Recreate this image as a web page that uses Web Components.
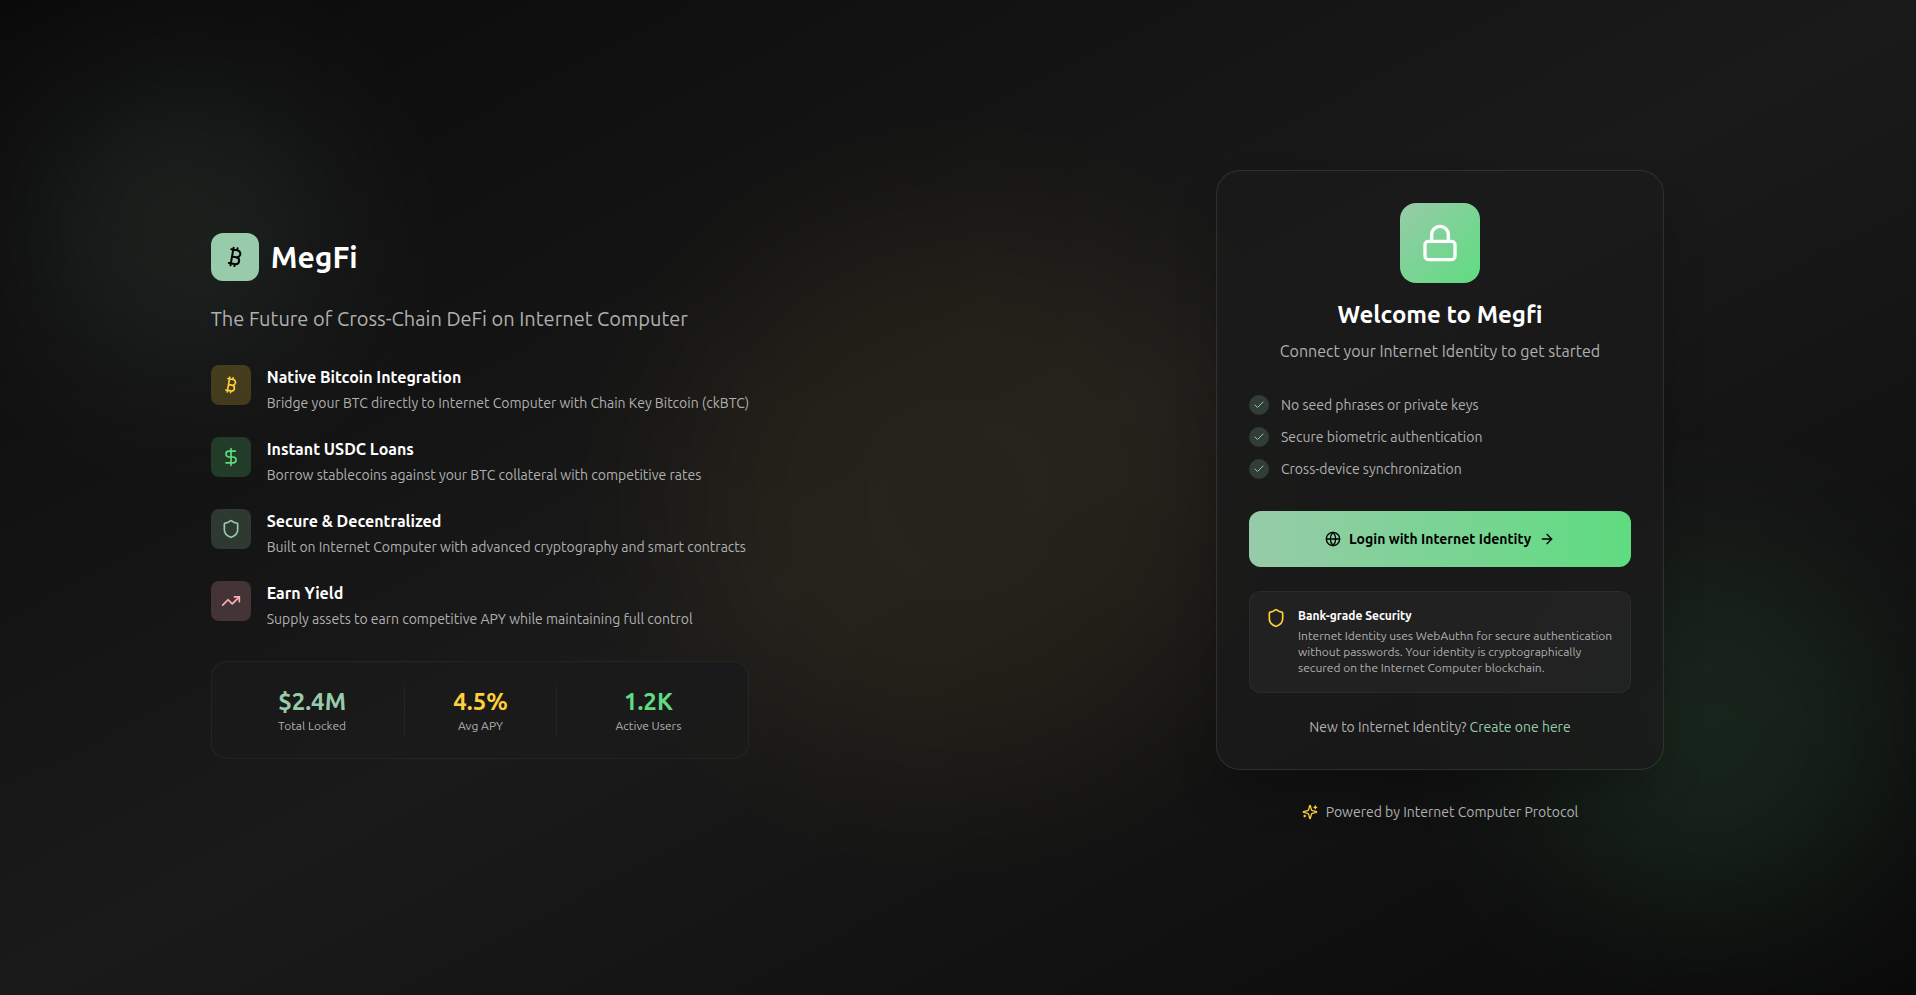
<!DOCTYPE html>
<html lang="en">
<head>
<meta charset="utf-8">
<meta name="viewport" content="width=device-width, initial-scale=1">
<title>MegFi</title>
<style>
  :root {
    --mint: #97cba9;
    --green: #5fdc80;
    --gold: #ffd03a;
    --pink: #ffb0b8;
    --text: #ffffff;
    --muted: #b0b0b0;
    --panel: rgba(26, 26, 26, .8);
  }
  body {
    margin: 0;
    background: #0a0a0a;
    color: var(--text);
    font-family: Ubuntu, "Open Sans", sans-serif;
    font-size: 16px;
    line-height: 24px;
  }
</style>
</head>
<body>
<login-page>
  <brand-intro slot="intro" name="MegFi" tagline="The Future of Cross-Chain DeFi on Internet Computer">
    <feature-item icon="bitcoin" tone="gold" heading="Native Bitcoin Integration">Bridge your BTC directly to Internet Computer with Chain Key Bitcoin (ckBTC)</feature-item>
    <feature-item icon="dollar" tone="green" heading="Instant USDC Loans">Borrow stablecoins against your BTC collateral with competitive rates</feature-item>
    <feature-item icon="shield" tone="mint" heading="Secure &amp; Decentralized">Built on Internet Computer with advanced cryptography and smart contracts</feature-item>
    <feature-item icon="trend" tone="pink" heading="Earn Yield">Supply assets to earn competitive APY while maintaining full control</feature-item>
    <stats-bar slot="stats">
      <stat-cell tone="mint" value="$2.4M">Total Locked</stat-cell>
      <stat-cell tone="gold" value="4.5%">Avg APY</stat-cell>
      <stat-cell tone="green" value="1.2K">Active Users</stat-cell>
    </stats-bar>
  </brand-intro>
  <login-card slot="login" heading="Welcome to Megfi" subheading="Connect your Internet Identity to get started">
    <check-item slot="checks">No seed phrases or private keys</check-item>
    <check-item slot="checks">Secure biometric authentication</check-item>
    <check-item slot="checks">Cross-device synchronization</check-item>
    <login-button slot="action">Login with Internet Identity</login-button>
    <security-note slot="note" heading="Bank-grade Security">Internet Identity uses WebAuthn for secure authentication without passwords. Your identity is cryptographically secured on the Internet Computer blockchain.</security-note>
  </login-card>
  <powered-by slot="login">Powered by Internet Computer Protocol</powered-by>
</login-page>

<script>
const ICONS = {
  bitcoin: '<path d="M11.767 19.089c4.924.868 6.14-6.025 1.216-6.894m-1.216 6.894L5.86 18.047m5.908 1.042-.347 1.97m1.563-8.864c4.924.869 6.14-6.025 1.215-6.893m-1.215 6.893-3.94-.694m5.155-6.2L8.29 4.26m5.908 1.042.348-1.97M7.48 20.364l3.126-17.727"/>',
  dollar: '<path d="M12 2v20"/><path d="M17 5H9.5a3.5 3.5 0 0 0 0 7h5a3.5 3.5 0 0 1 0 7H6"/>',
  shield: '<path d="M20 13c0 5-3.5 7.5-7.66 8.95a1 1 0 0 1-.67-.01C7.5 20.5 4 18 4 13V6a1 1 0 0 1 1-1c2 0 4.5-1.2 6.24-2.72a1.17 1.17 0 0 1 1.52 0C14.51 3.81 17 5 19 5a1 1 0 0 1 1 1z"/>',
  trend: '<path d="m22 7-8.5 8.5-5-5L2 17"/><path d="M16 7h6v6"/>',
  lock: '<rect x="3" y="11" width="18" height="11" rx="2"/><path d="M7 11V7a5 5 0 0 1 10 0v4"/>',
  check: '<path d="M20 6 9 17l-5-5"/>',
  globe: '<circle cx="12" cy="12" r="10"/><path d="M12 2a14.5 14.5 0 0 0 0 20 14.5 14.5 0 0 0 0-20"/><path d="M2 12h20"/>',
  arrow: '<path d="M5 12h14"/><path d="m12 5 7 7-7 7"/>',
  sparkles: '<path d="M9.937 15.5A2 2 0 0 0 8.5 14.063l-6.135-1.582a.5.5 0 0 1 0-.962L8.5 9.936A2 2 0 0 0 9.937 8.5l1.582-6.135a.5.5 0 0 1 .963 0L14.063 8.5A2 2 0 0 0 15.5 9.937l6.135 1.581a.5.5 0 0 1 0 .964L15.5 14.063a2 2 0 0 0-1.437 1.437l-1.582 6.135a.5.5 0 0 1-.963 0z"/><path d="M20 3v4"/><path d="M22 5h-4"/><path d="M4 17v2"/><path d="M5 18H3"/>'
};

class BaseElement extends HTMLElement {
  connectedCallback() {
    if (this.shadowRoot) return;
    this.attachShadow({ mode: 'open' }).innerHTML = `<style>${this.styles()}</style>${this.markup()}`;
  }
  attr(name) {
    return (this.getAttribute(name) || '').replace(/&/g, '&amp;').replace(/</g, '&lt;');
  }
}

class UiIcon extends BaseElement {
  styles() {
    return `
      :host { display: block; flex: none; width: var(--icon-size, 20px); height: var(--icon-size, 20px); }
      svg { display: block; width: 100%; height: 100%; }`;
  }
  markup() {
    return `<svg viewBox="0 0 24 24" fill="none" stroke="currentColor" stroke-width="2" stroke-linecap="round" stroke-linejoin="round" aria-hidden="true">${ICONS[this.getAttribute('name')]}</svg>`;
  }
}

class LoginPage extends BaseElement {
  styles() {
    return `
      :host {
        display: block; position: relative; overflow: hidden; min-height: 100vh;
        background: linear-gradient(to bottom right, #0a0a0a, #1a1a1a, #0a0a0a);
      }
      .glow { position: absolute; border-radius: 50%; filter: blur(80px); pointer-events: none; }
      .mint { top: 80px; left: 36px; width: 288px; height: 288px; background: var(--mint); opacity: .1; }
      .green { bottom: 80px; right: 24px; width: 360px; height: 360px; background: var(--green); opacity: .1; }
      .gold { top: 50%; left: 50%; width: 560px; height: 560px; transform: translate(-50%, -50%); background: var(--gold); opacity: .05; }
      main {
        position: relative; box-sizing: border-box; min-height: 100vh; padding-bottom: 4px;
        display: grid; grid-template-columns: repeat(auto-fit, minmax(min(100%, 600px), 1fr)); align-items: center;
      }
      section { display: grid; justify-content: center; padding: 32px; }
      .intro { padding-left: 34px; }
      .login { grid-template-columns: minmax(0, 448px); gap: 32px; padding-left: 38px; }`;
  }
  markup() {
    return `
      <div class="glow mint"></div><div class="glow green"></div><div class="glow gold"></div>
      <main>
        <section class="intro"><slot name="intro"></slot></section>
        <section class="login"><slot name="login"></slot></section>
      </main>`;
  }
}

class BrandIntro extends BaseElement {
  styles() {
    return `
      :host { display: grid; gap: 32px; }
      header { display: grid; gap: 24px; }
      .brand { display: flex; align-items: center; gap: 12px; }
      .logo { --icon-size: 24px; display: grid; place-items: center; width: 48px; height: 48px; border-radius: 12px; background: var(--mint); color: #000; }
      h1 { margin: 0; font-size: 30px; line-height: 36px; font-weight: 600; }
      p { margin: 0; font-size: 20px; line-height: 28px; color: var(--muted); }
      .features { display: grid; gap: 24px; }`;
  }
  markup() {
    return `
      <header>
        <div class="brand"><span class="logo"><ui-icon name="bitcoin"></ui-icon></span><h1>${this.attr('name')}</h1></div>
        <p>${this.attr('tagline')}</p>
      </header>
      <div class="features"><slot></slot></div>
      <slot name="stats"></slot>`;
  }
}

class FeatureItem extends BaseElement {
  styles() {
    return `
      :host { display: flex; gap: 16px; --tone: var(--mint); }
      :host([tone="gold"]) { --tone: var(--gold); }
      :host([tone="green"]) { --tone: var(--green); }
      :host([tone="pink"]) { --tone: var(--pink); }
      .tile { flex: none; display: grid; place-items: center; width: 40px; height: 40px; border-radius: 8px; color: var(--tone); background: color-mix(in srgb, var(--tone) 20%, transparent); }
      .text { display: grid; gap: 4px; }
      h3 { margin: 0; font-size: 16px; line-height: 24px; font-weight: 600; }
      p { margin: 0; font-size: 14px; line-height: 20px; color: var(--muted); }`;
  }
  markup() {
    return `
      <span class="tile"><ui-icon name="${this.attr('icon')}"></ui-icon></span>
      <div class="text"><h3>${this.attr('heading')}</h3><p><slot></slot></p></div>`;
  }
}

class StatsBar extends BaseElement {
  styles() {
    return `
      :host {
        display: grid; grid-template-columns: 11fr 9fr 11fr; padding: 24px 8px;
        border: 1px solid rgba(255, 255, 255, .05); border-radius: 16px; background: var(--panel);
      }
      ::slotted(:not(:first-child)) { border-left: 1px solid rgba(255, 255, 255, .05); }`;
  }
  markup() { return `<slot></slot>`; }
}

class StatCell extends BaseElement {
  styles() {
    return `
      :host { display: block; text-align: center; --tone: var(--mint); }
      :host([tone="gold"]) { --tone: var(--gold); }
      :host([tone="green"]) { --tone: var(--green); }
      strong { display: block; font-size: 24px; line-height: 32px; font-weight: 600; color: var(--tone); }
      span { display: block; font-size: 12px; line-height: 16px; color: var(--muted); }`;
  }
  markup() { return `<strong>${this.attr('value')}</strong><span><slot></slot></span>`; }
}

class LoginCard extends BaseElement {
  styles() {
    return `
      :host {
        display: grid; gap: 32px; padding: 32px; border: 1px solid rgba(255, 255, 255, .1); border-radius: 24px;
        background: var(--panel); box-shadow: 0 25px 50px -12px rgba(0, 0, 0, .3);
      }
      header { display: grid; justify-items: center; text-align: center; }
      .badge { --icon-size: 40px; display: grid; place-items: center; width: 80px; height: 80px; border-radius: 16px; background: linear-gradient(to bottom right, var(--mint), var(--green)); }
      h2 { margin: 16px 0 8px; font-size: 24px; line-height: 32px; font-weight: 600; }
      p { margin: 0; font-size: 16px; line-height: 24px; color: var(--muted); }
      .checks { display: grid; gap: 12px; }
      .actions { display: grid; gap: 24px; }
      .signup { font-size: 14px; line-height: 20px; text-align: center; }
      a { color: var(--mint); text-decoration: none; }`;
  }
  markup() {
    return `
      <header>
        <span class="badge"><ui-icon name="lock"></ui-icon></span>
        <h2>${this.attr('heading')}</h2>
        <p>${this.attr('subheading')}</p>
      </header>
      <div class="checks"><slot name="checks"></slot></div>
      <div class="actions">
        <slot name="action"></slot>
        <slot name="note"></slot>
        <p class="signup">New to Internet Identity? <a href="#create">Create one here</a></p>
      </div>`;
  }
}

class CheckItem extends BaseElement {
  styles() {
    return `
      :host { display: flex; align-items: center; gap: 12px; font-size: 14px; line-height: 20px; color: var(--muted); }
      .dot { --icon-size: 12px; flex: none; display: grid; place-items: center; width: 20px; height: 20px; border-radius: 50%; color: var(--mint); background: color-mix(in srgb, var(--mint) 20%, transparent); }`;
  }
  markup() { return `<span class="dot"><ui-icon name="check"></ui-icon></span><span><slot></slot></span>`; }
}

class LoginButton extends BaseElement {
  styles() {
    return `
      :host { display: block; --icon-size: 16px; }
      button {
        display: flex; align-items: center; justify-content: center; gap: 8px; width: 100%; min-height: 56px; padding: 0 24px;
        border: 0; border-radius: 12px; cursor: pointer; color: #000;
        background: linear-gradient(to right, var(--mint), var(--green));
        font-family: inherit; font-size: 14px; line-height: 20px; font-weight: 600;
      }`;
  }
  markup() {
    return `<button type="button"><ui-icon name="globe"></ui-icon><span><slot></slot></span><ui-icon name="arrow"></ui-icon></button>`;
  }
}

class SecurityNote extends BaseElement {
  styles() {
    return `
      :host { display: flex; gap: 12px; padding: 16px; border: 1px solid rgba(255, 255, 255, .05); border-radius: 12px; background: rgba(42, 42, 42, .5); }
      ui-icon { color: var(--gold); }
      .text { display: grid; gap: 4px; font-size: 12px; line-height: 16px; }
      h3 { margin: 0; font-size: 12px; font-weight: 600; }
      p { margin: 0; color: var(--muted); }`;
  }
  markup() {
    return `<ui-icon name="shield"></ui-icon><div class="text"><h3>${this.attr('heading')}</h3><p><slot></slot></p></div>`;
  }
}

class PoweredBy extends BaseElement {
  styles() {
    return `
      :host { --icon-size: 16px; display: flex; align-items: center; justify-content: center; gap: 8px; font-size: 14px; line-height: 20px; color: var(--muted); }
      ui-icon { color: var(--gold); }`;
  }
  markup() { return `<ui-icon name="sparkles"></ui-icon><span><slot></slot></span>`; }
}

customElements.define('ui-icon', UiIcon);
customElements.define('login-page', LoginPage);
customElements.define('brand-intro', BrandIntro);
customElements.define('feature-item', FeatureItem);
customElements.define('stats-bar', StatsBar);
customElements.define('stat-cell', StatCell);
customElements.define('login-card', LoginCard);
customElements.define('check-item', CheckItem);
customElements.define('login-button', LoginButton);
customElements.define('security-note', SecurityNote);
customElements.define('powered-by', PoweredBy);
</script>
</body>
</html>
